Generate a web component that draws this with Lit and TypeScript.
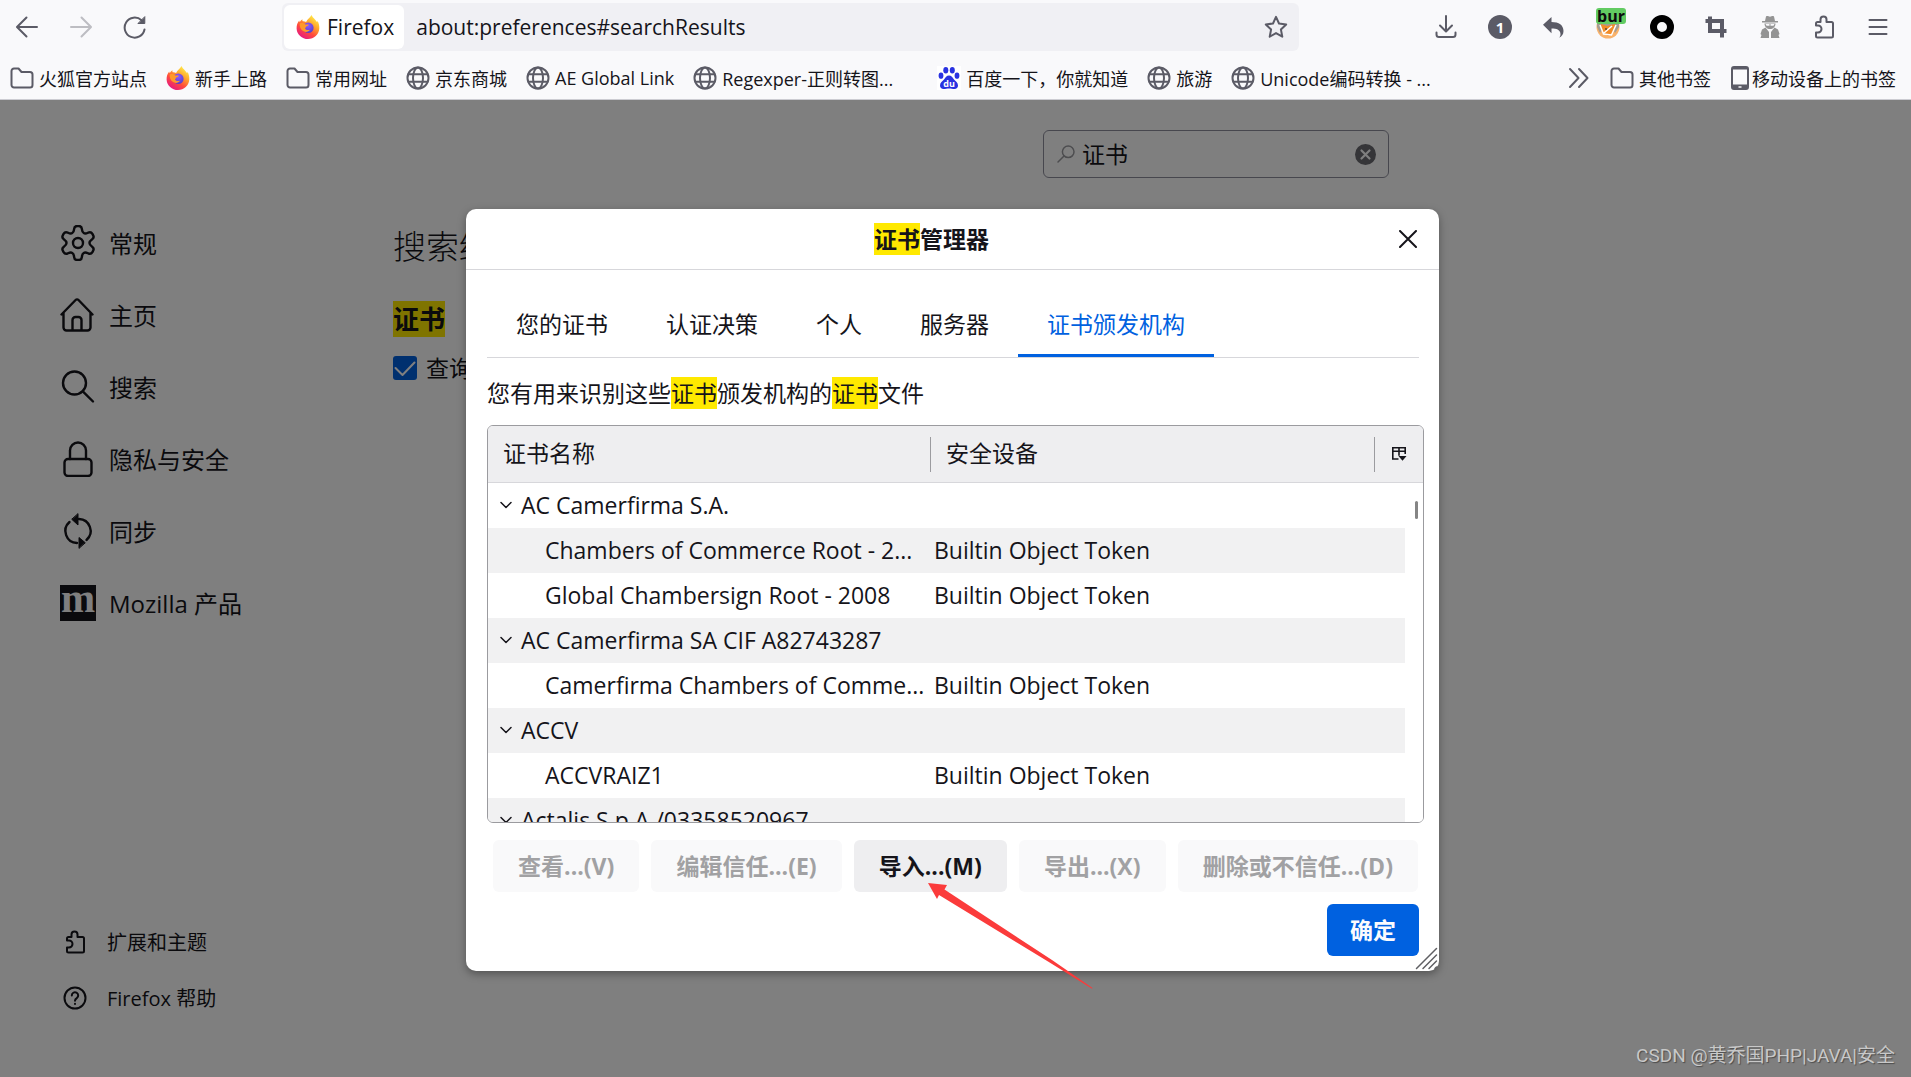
import { LitElement, html, css, svg, nothing, TemplateResult } from "lit";
import { customElement } from "lit/decorators.js";
import { classMap } from "lit/directives/class-map.js";

/** Closed polygon path whose corners are rounded by the given distance. */
function roundedPath(points: [number, number][], radius: number): string {
  const n = points.length;
  let d = "";
  for (let i = 0; i < n; i++) {
    const [px, py] = points[(i + n - 1) % n];
    const [cx, cy] = points[i];
    const [nx, ny] = points[(i + 1) % n];
    const lp = Math.hypot(px - cx, py - cy);
    const ln = Math.hypot(nx - cx, ny - cy);
    const rp = Math.min(radius, lp / 2);
    const rn = Math.min(radius, ln / 2);
    const ax = cx + ((px - cx) / lp) * rp;
    const ay = cy + ((py - cy) / lp) * rp;
    const bx = cx + ((nx - cx) / ln) * rn;
    const by = cy + ((ny - cy) / ln) * rn;
    d += `${i === 0 ? "M" : "L"}${ax.toFixed(2)} ${ay.toFixed(2)}Q${cx.toFixed(2)} ${cy.toFixed(2)} ${bx.toFixed(2)} ${by.toFixed(2)}`;
  }
  return d + "Z";
}

/** Outline of a six-toothed gear centred in a 36 unit box. */
function gearPath(): string {
  const points: [number, number][] = [];
  for (let k = 0; k < 6; k++) {
    for (const [a, r] of [[-21, 11.6], [-12, 17.4], [12, 17.4], [21, 11.6]]) {
      const t = ((k * 60 + a - 90) * Math.PI) / 180;
      points.push([18 + Math.cos(t) * r, 18 + Math.sin(t) * r]);
    }
  }
  return roundedPath(points, 3);
}

const firefoxLogo = (id: string) => html`<svg class="i24" viewBox="0 0 24 24" aria-hidden="true">
  <defs>
    <linearGradient id="fx-${id}" x1="0.85" y1="0.05" x2="0.25" y2="1">
      <stop offset="0" stop-color="#fff44f" /><stop offset="0.35" stop-color="#ffa52a" />
      <stop offset="0.65" stop-color="#ff4a3d" /><stop offset="1" stop-color="#e31587" />
    </linearGradient>
    <radialGradient id="fg-${id}" cx="0.5" cy="0.3" r="0.8">
      <stop offset="0" stop-color="#9059ff" /><stop offset="1" stop-color="#4a3cc0" />
    </radialGradient>
  </defs>
  <path fill="url(#fx-${id})" d="M15.5 0c1.2 3 3.8 4.200 5.600 7.200.3-.5.4-1 .4-1.500 1.300 2.300 2 5 1.800 7.800C22.900 19.500 18 24 12 24S.8 19.300.6 13.400C.5 10.500 1.500 7.700 3.200 5.600c.1.700.3 1.200.6 1.500.6-1.100 1.500-2.200 2.600-2.900-.1.800 0 1.500.3 2.100 1-.1 2.200 0 3.400.6 1.400-2.800 3.700-4 5.400-6.900z"/>
  <circle cx="12.300" cy="12.800" r="5.300" fill="url(#fg-${id})" />
  <path fill="#ff9a2a" d="M3.800 8.400c2-.9 4.300-.4 5.600 1.100h3.300c-.2 1.300-1.600 1.700-2.700 2.200-.4.600-.3 1.300-1 1.700 1 1.700 3 2 4.900 1.300-1.300 2.400-5 3-7.500.9-2-1.700-3-4.500-2.600-7.200z"/>
</svg>`;

const line = (body: TemplateResult, cls: string, box: string, width = "2") =>
  html`<svg class=${cls} viewBox=${box} fill="none" stroke="currentColor" stroke-width=${width} stroke-linecap="round" stroke-linejoin="round" aria-hidden="true">${body}</svg>`;

const backIcon = line(svg`<path d="M22 12H2.500M11.500 2.500L2 12l9.500 9.500"/>`, "i24", "0 0 24 24");
const forwardIcon = line(svg`<path d="M2 12h19.500M12.500 2.500L22 12l-9.500 9.500"/>`, "i24", "0 0 24 24");
const reloadIcon = line(svg`<path d="M21.500 14.500A10 10 0 1 1 18.500 5.300"/><path d="M21.800 2v6.500h-6.500z" fill="currentColor" stroke-width="1"/>`, "i24", "0 0 24 24");
const starIcon = line(svg`<path d="M12 1.800l3 6.700 7.200.9-5.300 5 1.400 7.300L12 18.100l-6.300 3.600 1.400-7.300-5.300-5 7.200-.9z"/>`, "i24", "0 0 24 24");
const downloadIcon = line(svg`<path d="M12 1v15M6 10.500l6 6 6-6M2.500 17.500v2a2.500 2.500 0 0 0 2.500 2.500h14a2.500 2.500 0 0 0 2.500-2.500v-2"/>`, "i24", "0 0 24 24");
const undoIcon = html`<svg class="i24" viewBox="0 0 24 24" aria-hidden="true"><path fill="currentColor" d="M9.500 2v5c7.500 0 12 3.200 12 9 0 3-1.600 5.400-4.200 6.700 1-1.600 1.500-3 1-5-.7-2.700-3.400-4.200-8.800-4.200v4.800L1 9.800z"/></svg>`;
const cropIcon = html`<svg class="i24" viewBox="0 0 24 24" fill="none" stroke="currentColor" stroke-width="4" aria-hidden="true"><path d="M6 1.500V16h16.500M1.500 6H18v16.500"/></svg>`;
const spyIcon = html`<svg class="i24 grey" viewBox="0 0 24 24" fill="currentColor" aria-hidden="true"><path d="M8 1.500c1.500-1 2.500.2 4 .2s2.500-1.200 4-.2l1 4.500h3v1.500H4V6h3zM6.500 8.500h11c0 3.500-2.500 5.500-5.500 5.500s-5.500-2-5.500-5.500z"/><path fill="#f9f9fb" d="M7.500 9h4v1.800h-3zM12.500 9h4l-1 1.800h-3z"/><path d="M7.500 12.500L11 17v6H2.500l1-3-1-1 1.500-4.500zM16.500 12.500L13 17v6h8.500l-1-3 1-1-1.500-4.500z"/></svg>`;
const puzzle = svg`<path d="M4 10.500V8.500A1.500 1.500 0 0 1 5.500 7H8.500V4.500a3 3 0 0 1 6 0V7h5A1.500 1.500 0 0 1 21 8.500v12.500a1.500 1.500 0 0 1-1.500 1.500H5.500A1.500 1.500 0 0 1 4 21v-3.500h2a3 3 0 0 0 0-7z"/>`;
const puzzleIcon = line(puzzle, "i24", "0 0 24 24");
const menuIcon = line(svg`<path d="M3.500 5h17M3.500 12h17M3.500 19h17"/>`, "i24", "0 0 24 24");
const folderIcon = line(svg`<path d="M1.500 19V5A2.500 2.500 0 0 1 4 2.500h4.500L11.500 6H20a2.500 2.500 0 0 1 2.500 2.500V19a2.500 2.500 0 0 1-2.500 2.500H4A2.500 2.500 0 0 1 1.500 19z"/>`, "i24", "0 0 24 24");
const globeIcon = line(svg`<circle cx="12" cy="12" r="10.500"/><ellipse cx="12" cy="12" rx="5" ry="10.500"/><path d="M2.500 8.300h19M2.500 15.700h19"/>`, "i24", "0 0 24 24");
const chevronsIcon = line(svg`<path d="M3 3l8.500 9L3 21M12 3l8.500 9-8.500 9"/>`, "i24", "0 0 24 24");
const phoneIcon = html`<svg class="phone" viewBox="0 0 20 24" aria-hidden="true"><rect x="2" y="1" width="16" height="22" rx="2" fill="none" stroke="currentColor" stroke-width="2"/><path fill="currentColor" d="M2 18.500h16V22H2zM2 1h16v2.500H2z"/><path stroke="#f9f9fb" stroke-width="1.500" d="M8.500 21h3"/></svg>`;
const baiduIcon = html`<svg class="i24" viewBox="0 0 24 24" aria-hidden="true"><rect width="24" height="24" fill="#fff"/><g fill="#2932e1"><ellipse cx="8.800" cy="4.300" rx="2.500" ry="3.300"/><ellipse cx="15.300" cy="4.300" rx="2.500" ry="3.300"/><ellipse cx="4" cy="9.700" rx="2.400" ry="3.100"/><ellipse cx="20" cy="9.700" rx="2.400" ry="3.100"/><path d="M12 9.500c2.500 0 3.500 2.200 5 4 1.500 1.700 4 3.200 4 6 0 2-1.500 3.500-3.500 3.500-2 0-3.500-.5-5.500-.5s-3.500.5-5.500.5C4.500 23 3 21.500 3 19.500c0-2.800 2.500-4.300 4-6 1.500-1.800 2.500-4 5-4z"/></g><text x="12" y="20.500" text-anchor="middle" font-family="Open Sans, sans-serif" font-size="9" font-weight="700" fill="#fff">du</text></svg>`;
const foxMaskIcon = html`<svg class="i24" viewBox="0 0 24 24" aria-hidden="true"><circle cx="12" cy="12" r="11.500" fill="#f9b26a"/><path fill="#a39c92" d="M1 8h22v4l-4 6-2-5-9-1-4 6-3-6z"/><path fill="#f28c28" d="M5 9l6 2 8-2-1 8-6 4-6-3z"/><path fill="none" stroke="#fff" stroke-width="1.500" d="M4 10l3.500 9 8 1L20 10M8 18l8-7"/><circle cx="10" cy="14" r="1" fill="#5b4636"/></svg>`;
const closeIcon = line(svg`<path d="M1 1l16 16M17 1L1 17"/>`, "i18", "0 0 18 18");
const checkIcon = line(svg`<path d="M2.500 12l7 7L21.500 6.500"/>`, "check-mark", "0 0 24 24");
const twistyIcon = line(svg`<path d="M1 3.500l5 5 5-5"/>`, "twisty", "0 0 12 12", "1.5");
const glassIcon = line(svg`<circle cx="11.200" cy="6.800" r="5.800"/><path d="M7 11l-6 6"/>`, "i18", "0 0 18 18", "1.5");
const clearIcon = html`<svg class="clear-glyph" viewBox="0 0 21 21" aria-hidden="true"><circle cx="10.500" cy="10.500" r="10.500" fill="currentColor"/><path d="M6.500 6.500l8 8M14.500 6.500l-8 8" stroke="#fff" stroke-width="2.200" stroke-linecap="round"/></svg>`;
const pickerIcon = html`<svg class="i18" viewBox="0 0 18 18" aria-hidden="true"><path fill="none" stroke="currentColor" stroke-width="1.600" d="M8.500 14H2.800V2.800h12.400V9M2.800 6.300h12.400M9 2.800v8"/><path fill="currentColor" d="M8.500 11h8L12.500 15.800z"/></svg>`;

const big = (body: TemplateResult) => line(body, "i36", "0 0 36 36", "2.4");
const sideItems: { label: string; icon: TemplateResult }[] = [
  { label: "常规", icon: big(svg`<path d=${gearPath()}/><circle cx="18" cy="18" r="5"/>`) },
  { label: "主页", icon: big(svg`<path d="M1.500 17.500L15.600 3a2 2 0 0 1 2.900 0L32.500 17.500M3.500 16v14.500A3 3 0 0 0 6.500 33.500h21a3 3 0 0 0 3-3V16M12.500 33V23a3 3 0 0 1 3-3h3a3 3 0 0 1 3 3v10"/>`) },
  { label: "搜索", icon: big(svg`<circle cx="14.500" cy="14" r="11.500"/><path d="M22.800 22.300L33 32.500"/>`) },
  { label: "隐私与安全", icon: big(svg`<rect x="4.500" y="18" width="27" height="17" rx="3.500"/><path d="M10 18V9.500a8 8 0 0 1 16 0V18"/>`) },
  { label: "同步", icon: big(svg`<path d="M9.500 9A12 12 0 0 0 17 30M26.500 27A12 12 0 0 0 19 6"/><path fill="currentColor" stroke-width="1" d="M18 1v11l-6-5.500zM19 35V24.500l6 5z"/>`) },
];

const bookmarks: { label: string; icon: TemplateResult; wide?: boolean }[] = [
  { label: "火狐官方站点", icon: folderIcon },
  { label: "新手上路", icon: firefoxLogo("bm") },
  { label: "常用网址", icon: folderIcon },
  { label: "京东商城", icon: globeIcon },
  { label: "AE Global Link", icon: globeIcon },
  { label: "Regexper-正则转图...", icon: globeIcon, wide: true },
  { label: "百度一下，你就知道", icon: baiduIcon },
  { label: "旅游", icon: globeIcon },
  { label: "Unicode编码转换 - ...", icon: globeIcon, wide: true },
];

const token = "Builtin Object Token";
const rows: { name: string; device?: string }[] = [
  { name: "AC Camerfirma S.A." },
  { name: "Chambers of Commerce Root - 2...", device: token },
  { name: "Global Chambersign Root - 2008", device: token },
  { name: "AC Camerfirma SA CIF A82743287" },
  { name: "Camerfirma Chambers of Comme...", device: token },
  { name: "ACCV" },
  { name: "ACCVRAIZ1", device: token },
  { name: "Actalis S.p.A./03358520967" },
];

const tabs = ["您的证书", "认证决策", "个人", "服务器", "证书颁发机构"];
const actions = [
  { label: "查看...(V)", disabled: true },
  { label: "编辑信任...(E)", disabled: true },
  { label: "导入...(M)", disabled: false },
  { label: "导出...(X)", disabled: true },
  { label: "删除或不信任...(D)", disabled: true },
];

const shared = css`
  * { box-sizing: border-box; }
  button { font: inherit; color: inherit; border: 0; padding: 0; background: none; display: flex; align-items: center; justify-content: center; white-space: nowrap; }
  a { color: inherit; text-decoration: none; }
  svg { display: block; flex: none; }
  .i18 { width: 18px; height: 18px; }
  .i24 { width: 24px; height: 24px; }
  .i36 { width: 36px; height: 36px; }
  mark { background: #ffe900; color: inherit; }
`;

@customElement("browser-chrome")
export class BrowserChrome extends LitElement {
  static styles = [shared, css`
    :host { display: block; background: #f9f9fb; color: #15141a; border-bottom: 1px solid #ccccd2; height: 100px; flex: none; }
    .nav { display: flex; align-items: center; height: 54px; padding: 3px 6px 3px 0; color: #5b5b66; }
    .nav button { width: 54px; height: 48px; }
    .nav .off { color: #bdbdc2; }
    .url { flex: 1; max-width: 1017px; margin-left: 120px; height: 48px; border-radius: 6px; background: #f0f0f4; display: flex; align-items: center; padding-left: 2px; }
    .url .identity { width: auto; height: 44px; background: #fff; border-radius: 6px; padding: 0 10px 0 12px; gap: 7px; color: #15141a; font-size: 21px; }
    .address { flex: 1; min-width: 0; border: 0; outline: 0; background: none; font: inherit; font-size: 21px; color: #15141a; padding: 0 0 0 12px; }
    .url .star { width: 46px; }
    .tools { display: flex; margin-left: auto; }
    .count { width: 24px; height: 24px; border-radius: 50%; background: #5b5b66; color: #fff; font-size: 15px; font-weight: 700; line-height: 24px; text-align: center; }
    .ring { width: 24px; height: 24px; border-radius: 50%; border: 7px solid #000; }
    .bur { position: relative; }
    .badge { position: absolute; left: 15px; top: 5px; background: #62cb62; color: #0c0c0d; font-size: 16px; line-height: 16px; font-weight: 700; padding: 0 1px; border-radius: 3px; }
    .grey { color: #949494; }
    .bookmarks { display: flex; align-items: center; height: 45px; margin-top: 1px; padding: 0 15px 0 10px; gap: 19px; font-size: 18px; white-space: nowrap; }
    .mark { display: flex; align-items: center; gap: 5px; }
    .mark svg { color: #5b5b66; }
    .mark.wide .label { width: 196px; overflow: hidden; }
    .more { margin-left: auto; color: #5b5b66; }
    .mark.tight { gap: 2px; }
    .phone { width: 20px; height: 24px; }
  `];

  render() {
    return html`
      <nav class="nav">
        <button aria-label="后退">${backIcon}</button>
        <button class="off" aria-label="前进">${forwardIcon}</button>
        <button aria-label="刷新">${reloadIcon}</button>
        <div class="url">
          <button class="identity">${firefoxLogo("id")}<span>Firefox</span></button>
          <input class="address" aria-label="地址" .value=${"about:preferences#searchResults"} />
          <button class="star" aria-label="收藏">${starIcon}</button>
        </div>
        <div class="tools">
          <button aria-label="下载">${downloadIcon}</button>
          <button><span class="count">1</span></button>
          <button aria-label="撤销">${undoIcon}</button>
          <button class="bur">${foxMaskIcon}<span class="badge">bur</span></button>
          <button aria-label="录制"><span class="ring"></span></button>
          <button aria-label="截图">${cropIcon}</button>
          <button aria-label="隐身">${spyIcon}</button>
          <button aria-label="扩展">${puzzleIcon}</button>
          <button aria-label="菜单">${menuIcon}</button>
        </div>
      </nav>
      <div class="bookmarks">
        ${bookmarks.map((b) => html`<a href="#" class=${classMap({ mark: true, wide: !!b.wide })}>${b.icon}<span class="label">${b.label}</span></a>`)}
        <button class="more" aria-label="更多">${chevronsIcon}</button>
        <a href="#" class="mark">${folderIcon}<span>其他书签</span></a>
        <a href="#" class="mark tight">${phoneIcon}<span>移动设备上的书签</span></a>
      </div>`;
  }
}

@customElement("preferences-page")
export class PreferencesPage extends LitElement {
  static styles = [shared, css`
    :host { display: flex; background: #fff; color: #15141a; font-size: 23px; }
    .side { width: 393px; flex: none; display: flex; flex-direction: column; justify-content: space-between; padding: 107px 0 51px 60px; }
    .group { display: flex; flex-direction: column; }
    .cat { display: flex; align-items: center; gap: 13px; height: 72px; font-size: 24px; }
    .foot { display: flex; align-items: center; gap: 20px; height: 56px; font-size: 20px; padding-left: 3px; }
    .label { padding-bottom: 2px; }
    .moz { width: 36px; height: 36px; background: #15141a; color: #fff; font: 700 41px/26px "Liberation Serif", serif; text-align: center; }
    .main { flex: 1; max-width: 996px; padding-top: 30px; }
    .search { display: flex; align-items: center; width: 346px; height: 48px; margin-left: auto; padding: 0 12px 0 13px; border: 1px solid #8f8f9d; border-radius: 6px; }
    .search .i18 { color: #9a9a9f; }
    .search input { flex: 1; min-width: 0; border: 0; outline: 0; background: none; font: inherit; color: inherit; padding: 0 0 2px 7px; }
    .clear-glyph { width: 21px; height: 21px; color: #6a6a70; }
    h1 { font-size: 33px; line-height: 44px; font-weight: 300; margin: 47px 0 32px; }
    h2 { font-size: 26px; line-height: 36px; margin: 0 0 18px; }
    .option { display: flex; align-items: center; gap: 9px; height: 26px; }
    .box { display: grid; width: 24px; height: 24px; }
    .box input, .check-mark { grid-area: 1 / 1; width: 24px; height: 24px; margin: 0; }
    .box input { appearance: none; background: #0060df; border-radius: 3px; }
    .check-mark { color: #fff; pointer-events: none; }
  `];

  render() {
    return html`
      <aside class="side">
        <div class="group">
          ${sideItems.map((s) => html`<a href="#" class="cat">${s.icon}<span class="label">${s.label}</span></a>`)}
          <a href="#" class="cat"><span class="moz">m</span><span class="label">Mozilla 产品</span></a>
        </div>
        <div class="group">
          <a href="#" class="foot">${puzzleIcon}<span class="label">扩展和主题</span></a>
          <a href="#" class="foot">${line(svg`<circle cx="12" cy="12" r="10.500"/><path d="M8.800 9.500a3.200 3.200 0 1 1 5 2.600c-1.200.8-1.800 1.300-1.800 2.600M12 17.800v.1"/>`, "i24", "0 0 24 24")}<span class="label">Firefox 帮助</span></a>
        </div>
      </aside>
      <main class="main">
        <div class="search">${glassIcon}<input aria-label="查找" .value=${"证书"} /><button aria-label="清除">${clearIcon}</button></div>
        <h1>搜索结果</h1>
        <h2><mark>证书</mark></h2>
        <label class="option"><span class="box"><input type="checkbox" checked />${checkIcon}</span><span class="label">查询</span></label>
      </main>`;
  }
}

@customElement("certificate-dialog")
export class CertificateDialog extends LitElement {
  static styles = [shared, css`
    :host { display: block; position: relative; background: #fff; color: #15141a; border-radius: 10px; box-shadow: 0 3px 9px rgba(0, 0, 0, 0.35); font-size: 23px; line-height: 30px; }
    .head { display: flex; align-items: center; height: 61px; border-bottom: 1px solid #d7d7db; padding: 0 10px; }
    h1 { flex: 1; margin: 0; font-size: 23px; text-align: center; }
    .close { width: 42px; height: 42px; }
    .body { padding: 27px 15px 15px 21px; }
    .tabs { display: flex; margin-right: 5px; border-bottom: 1px solid #d7d7db; }
    .tab { height: 60px; padding: 0 29px 3px; border-bottom: 3px solid transparent; }
    .tab.on { color: #0061e0; border-color: #0061e0; }
    .desc { margin: 20px 0 17px; }
    .tree { position: relative; height: 398px; overflow: hidden; border: 1px solid #9b9b9f; border-radius: 6px; }
    table { width: 100%; table-layout: fixed; border-collapse: separate; border-spacing: 0; }
    .c-name { width: 443px; }
    .c-pick { width: 48px; }
    th { height: 57px; padding: 0; text-align: left; font-weight: 400; background: #eeeef0; border-bottom: 1px solid #d7d7db; }
    .cell { display: flex; align-items: center; height: 35px; padding: 0 0 2px 15px; border-right: 1px solid #9b9b9f; }
    .cell.last { border: 0; width: 100%; padding: 0; }
    td { height: 45px; padding: 0 0 2px 3px; white-space: nowrap; overflow: hidden; }
    tbody tr:nth-child(even) td { background: #f1f1f2; }
    .name { display: flex; align-items: center; gap: 9px; padding-left: 9px; }
    .name.child { padding-left: 54px; }
    .twisty { width: 12px; height: 12px; }
    .gutter { position: absolute; right: 0; top: 57px; bottom: 0; width: 18px; background: #fff; padding: 18px 5px 0 10px; }
    .thumb { height: 18px; border-radius: 2px; background: #858585; }
    .actions { display: flex; gap: 12px; margin: 17px 6px 12px; }
    .actions button, .ok { height: 52px; border-radius: 6px; font-weight: 700; }
    .actions button { flex: 1 1 auto; background: #eeeef0; }
    .actions button:disabled { background: #f9f9fa; color: #a1a1a3; }
    .ok { width: 92px; margin: 0 5px 0 auto; background: #0061e0; color: #fbfbfe; }
    .grip { position: absolute; right: 1px; bottom: 1px; width: 23px; height: 23px; color: #5f5f63; }
    .arrow { position: absolute; left: 462px; top: 674px; width: 165px; height: 107px; pointer-events: none; }
  `];

  render() {
    return html`
      <header class="head">
        <h1><mark>证书</mark>管理器</h1>
        <button class="close" aria-label="关闭">${closeIcon}</button>
      </header>
      <div class="body">
        <div class="tabs" role="tablist">
          ${tabs.map((t, i) => html`<button role="tab" class=${classMap({ tab: true, on: i === 4 })}>${t}</button>`)}
        </div>
        <p class="desc">您有用来识别这些<mark>证书</mark>颁发机构的<mark>证书</mark>文件</p>
        <div class="tree">
          <table>
            <colgroup><col class="c-name" /><col /><col class="c-pick" /></colgroup>
            <thead>
              <tr>
                <th><div class="cell">证书名称</div></th>
                <th><div class="cell">安全设备</div></th>
                <th><button class="cell last" aria-label="选择列">${pickerIcon}</button></th>
              </tr>
            </thead>
            <tbody>
              ${rows.map((r) => html`<tr>
                <td><div class=${classMap({ name: true, child: !!r.device })}>${r.device ? nothing : twistyIcon}<span>${r.name}</span></div></td>
                <td>${r.device ?? nothing}</td>
                <td></td>
              </tr>`)}
            </tbody>
          </table>
          <div class="gutter"><div class="thumb"></div></div>
        </div>
        <div class="actions">${actions.map((a) => html`<button ?disabled=${a.disabled}>${a.label}</button>`)}</div>
        <button class="ok">确定</button>
      </div>
      ${line(svg`<path d="M1.500 21.500l20-20M8 21.500L21.500 8M14 21.500l7.500-7.500M20 21.500l1.500-1.500"/>`, "grip", "0 0 23 23", "1.5")}
      <svg class="arrow" viewBox="0 0 165 107" aria-hidden="true"><path fill="#fb3b3b" d="M0 0L19 2l-2.500 4.500L124 77l40.500 28-.5.800L120 78.500 11 12l-2 4z"/></svg>`;
  }
}

@customElement("app-root")
export class AppRoot extends LitElement {
  static styles = [shared, css`
    :host { display: flex; flex-direction: column; min-height: 100vh; font-family: "Open Sans", "Noto Sans CJK SC", sans-serif; line-height: normal; overflow: hidden; }
    .stage { flex: 1; display: grid; position: relative; overflow: hidden; }
    preferences-page, .shade { grid-area: 1 / 1; }
    .shade { display: flex; align-items: center; justify-content: center; padding: 3px 6px 0 0; background: rgba(0, 0, 0, 0.5); z-index: 1; }
    certificate-dialog { width: 973px; max-width: 100%; }
    .credit { position: absolute; right: 16px; bottom: 7px; z-index: 2; font: 400 19px/28px Roboto, "Noto Sans CJK SC", sans-serif; color: #c8c8c8; text-shadow: 1px 1px 1px #4c4c4c; }
  `];

  render() {
    return html`
      <browser-chrome></browser-chrome>
      <div class="stage">
        <preferences-page></preferences-page>
        <div class="shade"><certificate-dialog></certificate-dialog></div>
        <div class="credit">CSDN @黄乔国PHP|JAVA|安全</div>
      </div>`;
  }
}
